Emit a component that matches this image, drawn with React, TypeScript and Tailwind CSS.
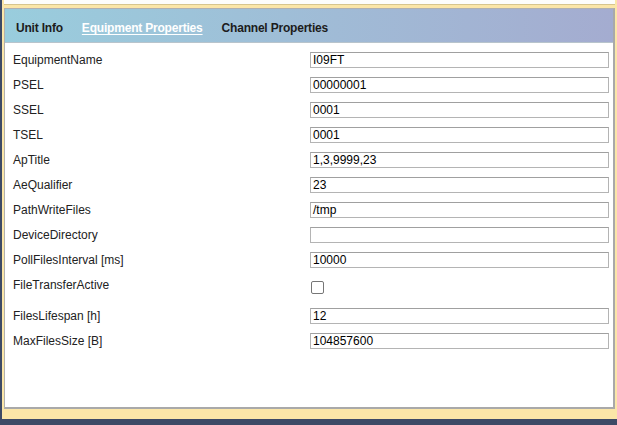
import React from 'react';

interface Field {
  label: string;
  value?: string;
  checkbox?: boolean;
}

const fields: Field[] = [
  { label: 'EquipmentName', value: 'I09FT' },
  { label: 'PSEL', value: '00000001' },
  { label: 'SSEL', value: '0001' },
  { label: 'TSEL', value: '0001' },
  { label: 'ApTitle', value: '1,3,9999,23' },
  { label: 'AeQualifier', value: '23' },
  { label: 'PathWriteFiles', value: '/tmp' },
  { label: 'DeviceDirectory', value: '' },
  { label: 'PollFilesInterval [ms]', value: '10000' },
  { label: 'FileTransferActive', checkbox: true },
  { label: 'FilesLifespan [h]', value: '12' },
  { label: 'MaxFilesSize [B]', value: '104857600' },
];

function FieldRow({ field }: { field: Field }) {
  if (field.checkbox) {
    return (
      <div className="flex h-[31px]">
        <div className="w-[305px] h-[25px] flex items-center pl-[8px]">{field.label}</div>
        <div className="pt-[9px] pl-[1px]">
          <div className="w-[13px] h-[13px] border border-[#767676] rounded-[2px] bg-white" />
        </div>
      </div>
    );
  }
  return (
    <div className="flex items-center h-[25px]">
      <div className="w-[305px] pl-[8px]">{field.label}</div>
      <div className="w-[299px] h-[16px] border border-[#b4b4b4] border-t-[#a0a0a0] bg-white pl-[2px] text-black leading-[14px]">
        {field.value}
      </div>
    </div>
  );
}

export default function App() {
  return (
    <div
      className="w-[617px] h-[425px] bg-[#3d4a66] overflow-hidden"
      style={{ fontFamily: '"Liberation Sans", Arial, sans-serif' }}
    >
      <div className="ml-[2px] w-[615px] h-[419px] bg-[#fbe6a8] flex flex-col pl-[2px]">
        {/* previous panel edge */}
        <div className="h-[5px] bg-[#fdfdfb] border-b border-[#d6c58e] mr-[2px]" />
        <div className="h-[3px]" />
        {/* main panel */}
        <div className="flex-1 flex flex-col border-l border-t border-[#b0b0b0] border-r-2 border-r-[#a9a9a9] border-b-2 border-b-[#a9a9a9] mb-[10px] mr-[2px] bg-white">
          <div className="h-[34px] pt-[5px] flex items-center bg-gradient-to-r from-[#99cddd] to-[#a4acd0] border-b border-[#b8c4cc] text-[12px] font-bold text-[#1c1c1c] tracking-[-0.2px]">
            <span className="ml-[11px]">Unit Info</span>
            <span className="ml-[19px] text-white underline underline-offset-2">Equipment Properties</span>
            <span className="ml-[19px]">Channel Properties</span>
          </div>
          <div className="pt-[4px] text-[12px] text-[#222]">
            {fields.map((f) => (
              <FieldRow key={f.label} field={f} />
            ))}
          </div>
        </div>
      </div>
    </div>
  );
}
